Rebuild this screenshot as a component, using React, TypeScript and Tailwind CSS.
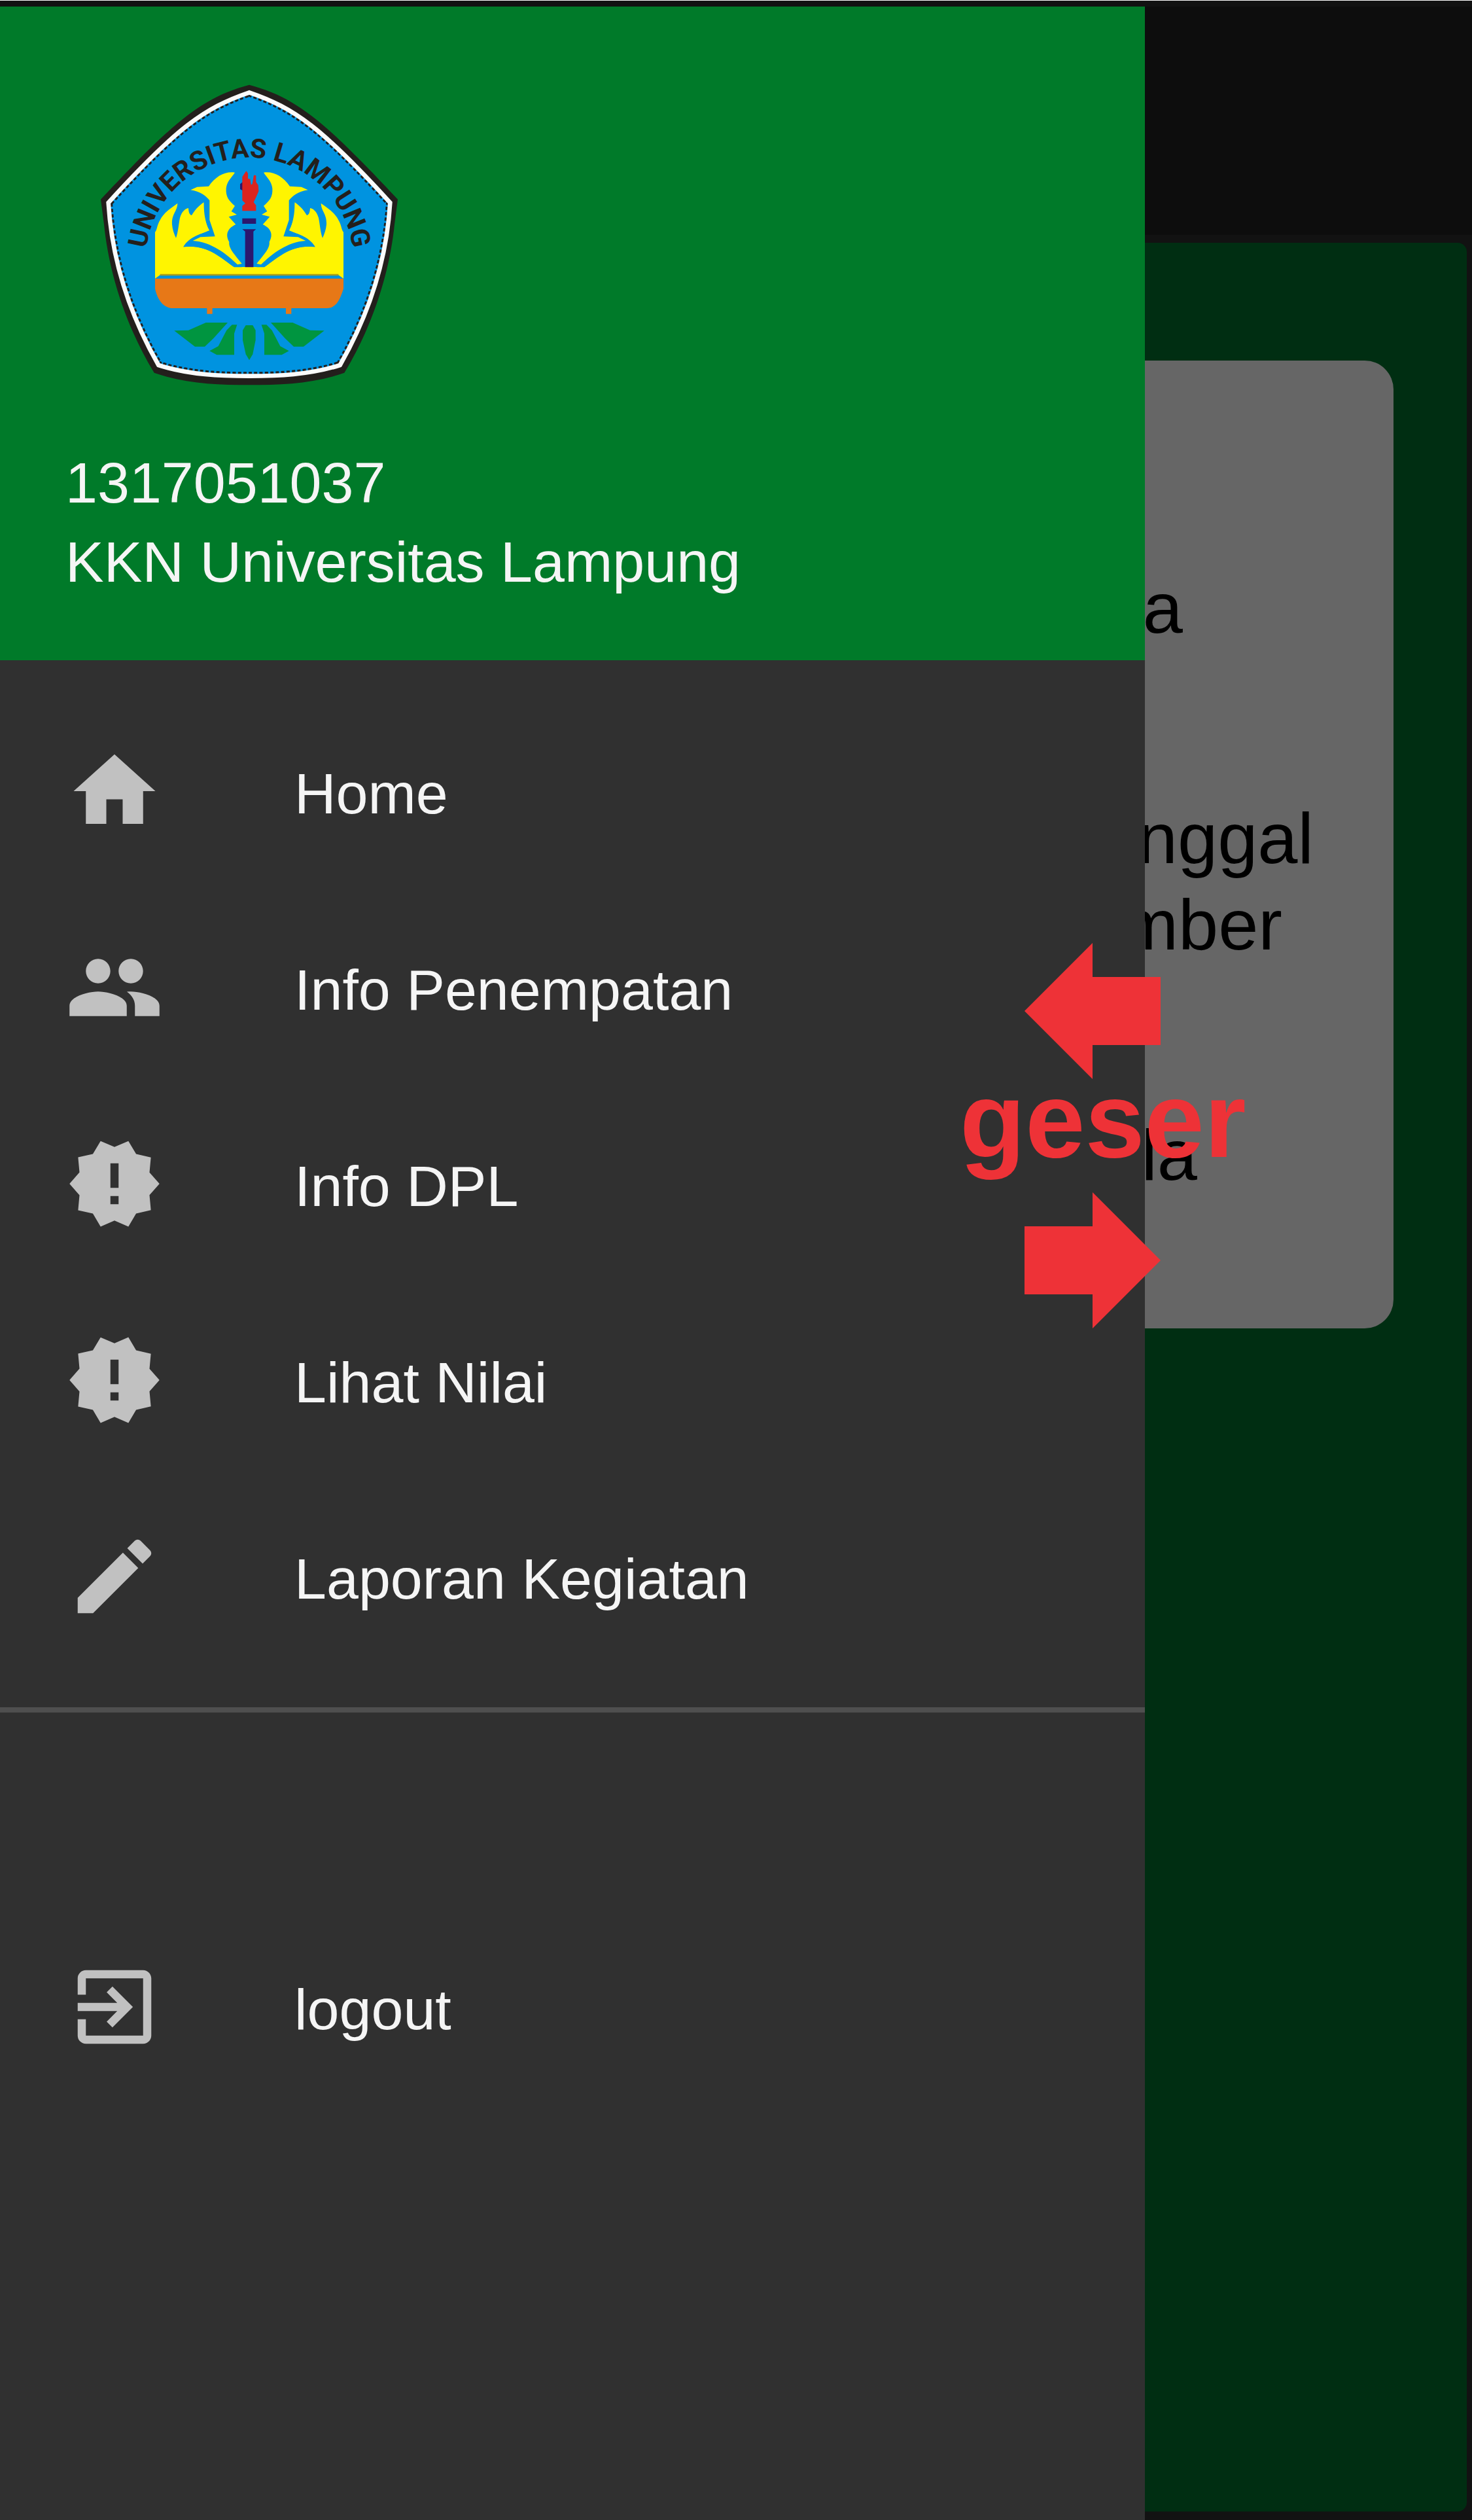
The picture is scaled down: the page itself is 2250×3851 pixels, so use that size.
import { MdEdit, MdExitToApp, MdHome, MdNewReleases, MdPeople } from "react-icons/md";
import type { IconType } from "react-icons";

const HALF_WREATH =
  "M322 948V735C332 725 330 705 345 680C362 645 395 625 425 603C424 640 398 650 400 700C402 725 410 745 418 762C428 735 430 700 436 670C445 640 460 628 475 625C476 640 478 655 490 658C500 640 520 615 546 598C545 640 550 690 572 728C540 742 480 755 452 803C560 790 620 850 685 895H755V932H345Z";
const HALF_PETAL =
  "M688 462C640 456 600 480 568 525L515 528L485 542C530 548 556 570 572 590L572 680L597 755L530 758L495 775C580 780 650 835 700 884L720 880C690 840 658 810 662 780C645 750 650 720 692 700L660 665L697 655L672 640L688 615C660 590 646 575 648 535C652 500 670 490 688 462Z";
const PETAL_GAP = "M546 598L572 590V680L597 755L530 758L495 775C580 780 650 835 700 884H720V896H685C620 850 560 790 452 803C480 755 540 742 572 728C550 690 552 640 546 598Z";
const OUTER_LEAF = "M410 1187L475 1185L555 1150H655L590 1222L550 1260H505Z";
const INNER_LEAF = "M698 1160L685 1200V1298H605L572 1280L612 1258L650 1185L675 1160Z";
const SHIELD =
  "M754 95C960 165 1090 260 1400 600C1385 850 1310 1100 1170 1345C1030 1390 880 1395 754 1395C628 1395 478 1390 338 1345C198 1100 123 850 108 600C418 260 548 165 754 95Z";

function HalfEmblem() {
  return (
    <>
      <path d={HALF_WREATH} fill="#fff500" />
      <path d={PETAL_GAP} fill="#0093e0" />
      <path d={HALF_PETAL} fill="#fff500" />
      <path d={OUTER_LEAF} fill="#009540" />
      <path d={INNER_LEAF} fill="#009540" />
    </>
  );
}

function UniversityLogo() {
  return (
    <svg viewBox="70 55 1371 1386" className="h-[462px] w-[457px]" role="img" aria-label="Universitas Lampung">
      <path
        d="M754 60C980 120 1110 240 1435 585L1420 700C1400 900 1330 1150 1190 1380C1050 1430 900 1436 754 1436C608 1436 458 1430 318 1380C178 1150 108 900 88 700L73 585C398 240 528 120 754 60Z"
        fill="#231f1c"
      />
      <path d={SHIELD} fill="#0093e0" stroke="#231f1c" strokeWidth="38" strokeDasharray="15 10" />
      <path d={SHIELD} fill="none" stroke="#fbfbfb" strokeWidth="20" />
      <path id="motto-arc" d="M278 870A477 477 0 0 1 1232 870" fill="none" />
      <text fill="#231f1c" fontSize="122" fontWeight="700" fontFamily="Roboto, sans-serif" textAnchor="middle">
        <textPath href="#motto-arc" startOffset="50%">
          UNIVERSITAS LAMPUNG
        </textPath>
      </text>
      <HalfEmblem />
      <g transform="matrix(-1 0 0 1 1508 0)">
        <HalfEmblem />
      </g>
      <path d="M345 931H1163" stroke="#a89c1c" strokeWidth="7" />
      <path d="M712 515L724 505V545L712 538Z" fill="#2b176e" />
      <path
        d="M740 455L722 482V590L736 603L722 615V638H785V612L774 598L784 578L797 548L795 520L785 505V475L775 474L768 515L762 518L758 492L748 490V465Z"
        fill="#dc241f"
      />
      <path d="M722 672H785V697H722ZM722 722H785L773 732V896H735V732Z" fill="#2b176e" />
      <path
        d="M322 948H1186V995C1174 1030 1160 1083 1110 1084H947V1110H922V1084H585V1110H560V1084H395C348 1076 330 1030 322 995Z"
        fill="#e77817"
      />
      <path d="M738 1162H770L783 1185V1230L770 1295L754 1322L738 1295L724 1230V1185Z" fill="#009540" />
    </svg>
  );
}

function MenuItem({ icon: Icon, label }: { icon: IconType; label: string }) {
  return (
    <a href="#" className="flex h-[300px] items-center gap-[200px] pl-[100px]">
      <Icon className="size-[150px] shrink-0 text-[#c1c1c1]" aria-hidden="true" />
      <span className="pt-[8px] text-[88px] leading-[120px] whitespace-nowrap">{label}</span>
    </a>
  );
}

function Arrow({ direction }: { direction: "left" | "right" }) {
  return (
    <svg viewBox="0 0 208 208" className="ml-[99px] size-[208px]" fill="#ee3237" aria-hidden="true">
      <path
        d={
          direction === "left"
            ? "M0 104L104 0V52H208V156H104V208Z"
            : "M208 104L104 0V52H0V156H104V208Z"
        }
      />
    </svg>
  );
}

export default function App() {
  return (
    <div className="relative flex min-h-screen overflow-hidden border-t border-white bg-[#121212] pt-[9px] font-['Liberation_Sans',Arial,sans-serif]">
      <aside className="relative z-10 w-7/9 shrink-0 bg-[#303030] text-[#f5f5f5]">
        <header className="bg-[#007a29] pt-[118px] pb-[90px]">
          <div className="pl-[153px]">
            <UniversityLogo />
          </div>
          <div className="pt-[87px] pl-[100px] text-[88px] leading-[121px]">
            <p>1317051037</p>
            <p>KKN Universitas Lampung</p>
          </div>
        </header>
        <nav>
          <div className="py-[50px]">
            <MenuItem icon={MdHome} label="Home" />
            <MenuItem icon={MdPeople} label="Info Penempatan" />
            <MenuItem icon={MdNewReleases} label="Info DPL" />
            <MenuItem icon={MdNewReleases} label="Lihat Nilai" />
            <MenuItem icon={MdEdit} label="Laporan Kegiatan" />
          </div>
          <hr className="h-[8px] border-0 bg-[#4f4f4f]" />
          <div className="pt-[300px]">
            <MenuItem icon={MdExitToApp} label="logout" />
          </div>
        </nav>
      </aside>

      <main className="flex min-w-0 flex-1 flex-col pb-[13px]">
        <div className="h-[349px] shrink-0 bg-[#0d0d0d]" />
        <div className="mt-[12px] mr-[8px] flex-1 rounded-r-[14px] bg-[#002e12] pt-[180px] pr-[112px]">
          <section className="flex flex-col items-end gap-[220px] rounded-r-[44px] bg-[#666666] pt-[312px] pb-[199px] text-[110px] leading-[132px] text-black">
            <p className="pr-[322px]">a</p>
            <div className="flex flex-col items-end">
              <p className="pr-[122px]">nggal</p>
              <p className="pr-[170px]">mber</p>
            </div>
            <p className="pr-[300px]">la</p>
          </section>
        </div>
      </main>

      <div className="absolute top-[1440px] left-[1467px] z-20 text-[#ee3237]">
        <Arrow direction="left" />
        <p className="mb-[48px] text-[164px] leading-[125px] font-bold">geser</p>
        <Arrow direction="right" />
      </div>
    </div>
  );
}
